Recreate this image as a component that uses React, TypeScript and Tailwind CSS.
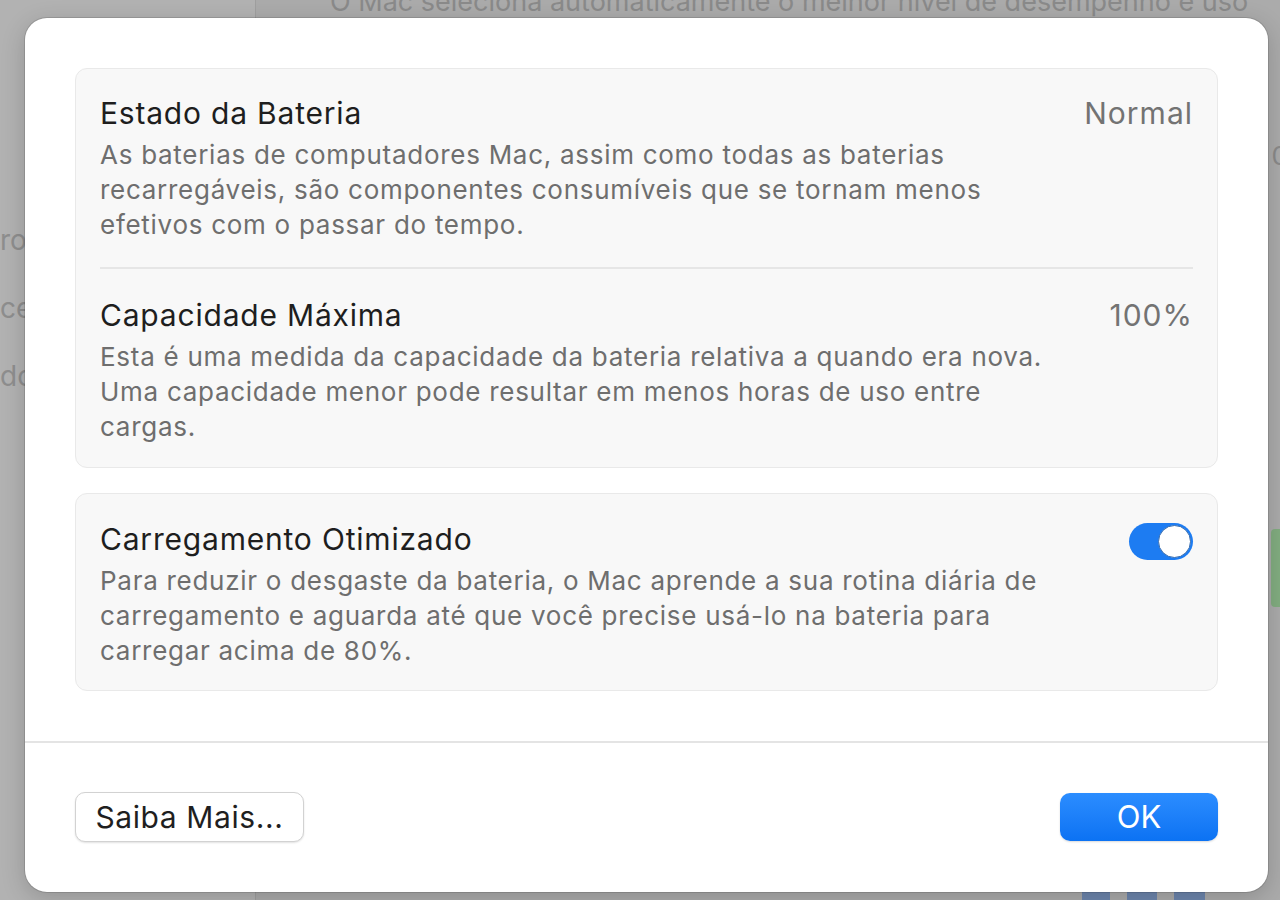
import React from "react";

const font = { fontFamily: "Inter, 'Noto Sans', sans-serif" };

function Toggle() {
  return (
    <div className="-mb-[4px] mt-[1px] flex h-[37px] w-[64px] shrink-0 items-center justify-end rounded-full bg-[#1d7cf2] p-[2px]">
      <div className="h-[33px] w-[33px] rounded-full border border-[#3b6fb0] bg-white" />
    </div>
  );
}

type RowProps = {
  title: string;
  value?: string;
  toggle?: boolean;
  lines: string[];
};

function Row({ title, value, toggle, lines }: RowProps) {
  return (
    <div>
      <div className="flex items-start justify-between">
        <h3 className="text-[30px] leading-[34px] tracking-[0.8px] text-[#1e1e1e]">{title}</h3>
        {value && (
          <span className="text-[30px] leading-[34px] tracking-[1px] text-[#737373]">{value}</span>
        )}
        {toggle && <Toggle />}
      </div>
      <p className="mt-[7px] text-[26px] leading-[35px] tracking-[0.72px] text-[#6e6e6e]">
        {lines.map((l, i) => (
          <span key={i} className="block">
            {l}
          </span>
        ))}
      </p>
    </div>
  );
}

export default function App() {
  return (
    <div
      className="relative h-[900px] w-[1280px] overflow-hidden bg-[#ababab]"
      style={font}
    >
      {/* window behind the sheet */}
      <div className="flex h-full">
        <div className="flex w-[256px] flex-col border-r border-[#9f9f9f] bg-[#b2b2b2] pt-[206px] text-[28px] text-[#8e8e8e]">
          <span className="leading-[68px]">ro</span>
          <span className="leading-[68px]">ce</span>
          <span className="leading-[68px]">do</span>
        </div>
        <div className="flex flex-1 flex-col">
          <div className="-mt-[14px] pl-[74px] text-[27px] leading-[32px] text-[#8a8a8a]">
            O Mac seleciona automaticamente o melhor nível de desempenho e uso
          </div>
          <div className="mt-[122px] flex justify-end text-[26px] leading-[32px] text-[#8a8a8a]">
            <span className="-mr-[8px]">0</span>
          </div>
          <div className="mt-[357px] flex justify-end">
            <div className="h-[78px] w-[9px] rounded-l-[4px] bg-[#82ad80]" />
          </div>
          <div className="mt-auto flex justify-end gap-[17px] pr-[75px]">
            <div className="h-[8px] w-[28px] bg-[#6d86ad]" />
            <div className="h-[8px] w-[30px] bg-[#6d86ad]" />
            <div className="h-[8px] w-[31px] bg-[#6d86ad]" />
          </div>
        </div>
      </div>

      {/* sheet */}
      <div className="absolute left-[25px] top-[18px] flex h-[874px] w-[1243px] flex-col rounded-[22px] bg-white shadow-[0_0_0_1px_rgba(0,0,0,0.12),0_6px_24px_rgba(0,0,0,0.18)]">
        <div className="px-[50px] pt-[50px]">
          <div className="rounded-[12px] border border-[#e9e9e9] bg-[#f8f8f8] px-[24px] pb-[23px] pt-[27px]">
            <Row
              title="Estado da Bateria"
              value="Normal"
              lines={[
                "As baterias de computadores Mac, assim como todas as baterias",
                "recarregáveis, são componentes consumíveis que se tornam menos",
                "efetivos com o passar do tempo.",
              ]}
            />
            <div className="mb-[29px] mt-[25px] h-[2px] bg-[#e6e6e6]" />
            <Row
              title="Capacidade Máxima"
              value="100%"
              lines={[
                "Esta é uma medida da capacidade da bateria relativa a quando era nova.",
                "Uma capacidade menor pode resultar em menos horas de uso entre",
                "cargas.",
              ]}
            />
          </div>

          <div className="mt-[25px] rounded-[12px] border border-[#e9e9e9] bg-[#f8f8f8] px-[24px] pb-[22px] pt-[28px]">
            <Row
              title="Carregamento Otimizado"
              toggle
              lines={[
                "Para reduzir o desgaste da bateria, o Mac aprende a sua rotina diária de",
                "carregamento e aguarda até que você precise usá-lo na bateria para",
                "carregar acima de 80%.",
              ]}
            />
          </div>
        </div>

        <div className="mt-[50px] h-[2px] bg-[#e4e4e4]" />

        <div className="flex items-center justify-between px-[50px] pt-[49px]">
          <button className="h-[50px] w-[229px] rounded-[10px] border border-[#d2d2d2] bg-white text-[30px] tracking-[0.6px] text-[#1f1f1f] shadow-[0_1px_2px_rgba(0,0,0,0.12)]">
            Saiba Mais...
          </button>
          <button className="h-[48px] w-[158px] rounded-[10px] bg-gradient-to-b from-[#2b8dff] to-[#0b72f3] text-[31px] text-white shadow-[0_1px_2px_rgba(0,0,0,0.15)]">
            OK
          </button>
        </div>
      </div>
    </div>
  );
}
